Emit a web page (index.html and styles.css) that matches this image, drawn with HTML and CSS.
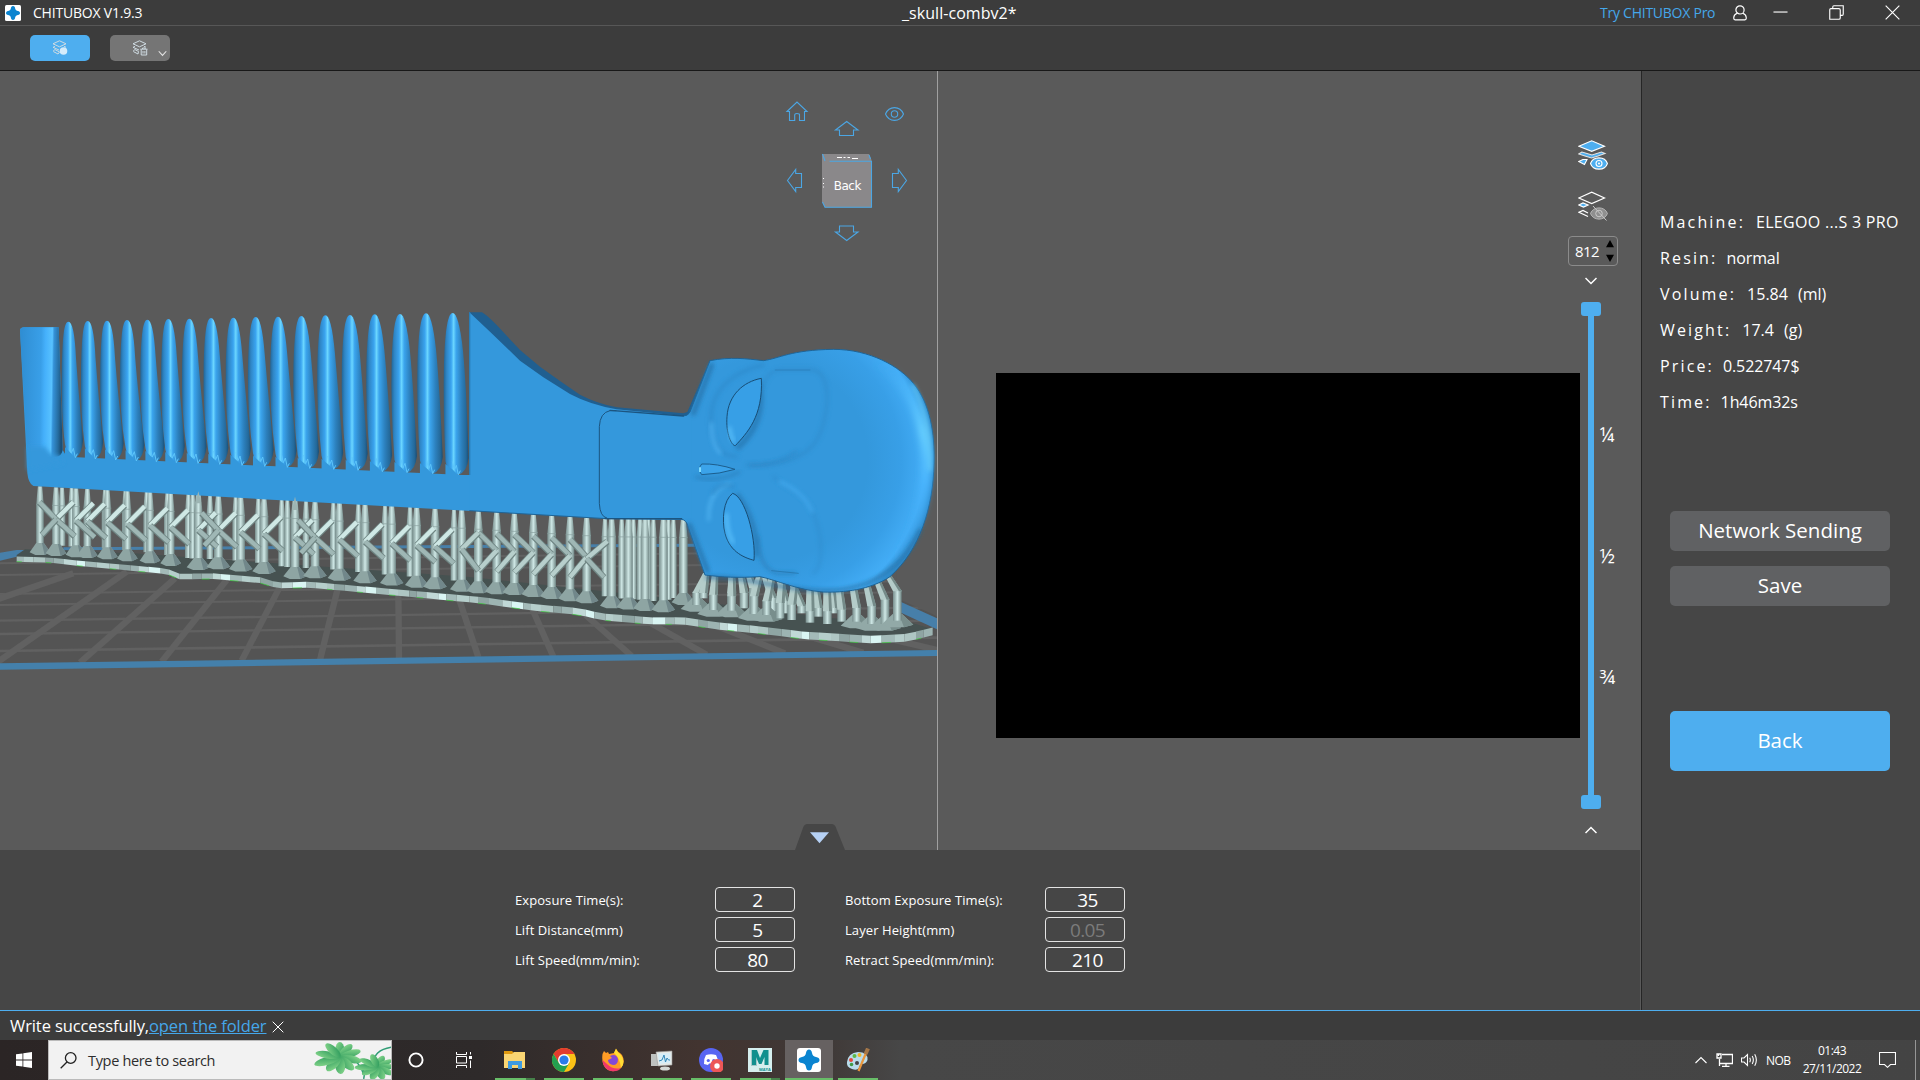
FILE: index.html
```html
<!DOCTYPE html>
<html lang="en">
<head>
<meta charset="utf-8">
<title>CHITUBOX V1.9.3</title>
<link rel="stylesheet" href="styles.css">
</head>
<body>
<svg class="defs" width="0" height="0">
  <defs>
    <linearGradient id="tooth" x1="0" x2="1" y1="0" y2="0">
      <stop offset="0" stop-color="#226596"/><stop offset=".12" stop-color="#2f86c6"/><stop offset=".3" stop-color="#3aa4f0"/>
      <stop offset=".4" stop-color="#6bd6ff"/><stop offset=".5" stop-color="#3ba5ee"/><stop offset=".72" stop-color="#2c80bd"/><stop offset=".9" stop-color="#24699a"/><stop offset="1" stop-color="#1a4e75"/>
    </linearGradient>
    <linearGradient id="block" x1="0" x2="1" y1="0" y2=".05">
      <stop offset="0" stop-color="#2f8dd2"/><stop offset=".5" stop-color="#399fe8"/><stop offset=".6" stop-color="#45b0fb"/><stop offset=".76" stop-color="#58c2ff"/><stop offset=".8" stop-color="#3592d8"/><stop offset=".93" stop-color="#256c9f"/><stop offset="1" stop-color="#1b4f76"/>
    </linearGradient>
    <linearGradient id="pillar" x1="0" x2="1" y1="0" y2="0">
      <stop offset="0" stop-color="#788e8d"/><stop offset=".3" stop-color="#a7bfbd"/><stop offset=".5" stop-color="#cfe8e6"/><stop offset=".75" stop-color="#a0b8b6"/><stop offset="1" stop-color="#6d8281"/>
    </linearGradient>
    <radialGradient id="skull" gradientUnits="userSpaceOnUse" cx="2300" cy="510" r="505">
      <stop offset="0" stop-color="#3498dc"/><stop offset=".6" stop-color="#3498dc"/><stop offset=".8" stop-color="#389fe7"/><stop offset=".94" stop-color="#43adf6"/><stop offset="1" stop-color="#2f8cce"/>
    </radialGradient>
    <linearGradient id="rim" x1="0" x2="0" y1="0" y2="1">
      <stop offset="0" stop-color="#4ab5ff" stop-opacity="0"/><stop offset=".35" stop-color="#6bd3ff"/><stop offset=".6" stop-color="#4bb6ff"/><stop offset="1" stop-color="#3ba4ee" stop-opacity="0"/>
    </linearGradient>
    <filter id="soft" x="-30%" y="-30%" width="160%" height="160%"><feGaussianBlur stdDeviation="6"/></filter>
    <filter id="soft2" x="-50%" y="-30%" width="200%" height="160%"><feGaussianBlur stdDeviation="11"/></filter>
    <linearGradient id="leafg" x1="0" x2="1" y1="0" y2="1"><stop offset="0" stop-color="#8fdc90"/><stop offset="1" stop-color="#239457"/></linearGradient>
    <g id="leaf" fill="url(#leafg)">
      <ellipse cx="0" cy="-8" rx="3.6" ry="8"/><ellipse cx="0" cy="-8" rx="3.6" ry="8.500" transform="rotate(35)"/><ellipse cx="0" cy="-9" rx="3.6" ry="9" transform="rotate(68)"/>
      <ellipse cx="0" cy="-9" rx="4" ry="9" transform="rotate(105)"/><ellipse cx="0" cy="-9" rx="4" ry="8.500" transform="rotate(142)"/><ellipse cx="0" cy="-9" rx="4" ry="9" transform="rotate(178)"/>
      <ellipse cx="0" cy="-9" rx="4" ry="9" transform="rotate(215)"/><ellipse cx="0" cy="-11" rx="4.200" ry="11" transform="rotate(248)"/><ellipse cx="0" cy="-10" rx="3.800" ry="10" transform="rotate(283)"/><ellipse cx="0" cy="-9" rx="3.600" ry="9" transform="rotate(322)"/>
    </g>
  </defs>
</svg>

<header class="titlebar">
  <svg class="app-logo" viewBox="0 0 16 16"><rect width="16" height="16" rx="1.5" fill="#fff"/><path fill="#0a84d0" d="M8 1 Q10 1 10.3 4.2 L11.8 5.7 Q15 6 15 8 Q15 10 11.8 10.3 L10.3 11.8 Q10 15 8 15 Q6 15 5.7 11.8 L4.2 10.3 Q1 10 1 8 Q1 6 4.2 5.7 L5.7 4.2 Q6 1 8 1Z"/></svg>
  <span class="app-name">CHITUBOX V1.9.3</span>
  <span class="doc-name">_skull-combv2*</span>
  <div class="window-tools">
    <a class="try-pro">Try CHITUBOX Pro</a>
    <svg class="user-icon" viewBox="0 0 14 16"><path d="M4.2 8.2 Q1 9.5 .8 12.2 V13.6 Q.8 14.8 2 14.8 H12 Q13.2 14.8 13.2 13.6 V12.2 Q13 9.5 9.8 8.2 M7 .8 A4 4 0 0 1 7 9 A4 4 0 0 1 7 .8Z"/></svg>
    <svg class="win-icon" viewBox="0 0 16 16"><path d="M.5 7.5H15.5"/></svg>
    <svg class="win-icon" viewBox="0 0 16 16"><path d="M4 3.5V2Q4 .8 5.2 .8H15.2V9.5Q15.2 11 14 11H12 M2 3.8H10.5Q12 3.8 12 5.2V13.8Q12 15.2 10.5 15.2H.8V5Q.8 3.8 2 3.8Z"/></svg>
    <svg class="win-icon" viewBox="0 0 16 16"><path d="M.7 .7L15.3 15.3M15.3 .7L.7 15.3"/></svg>
  </div>
</header>

<nav class="toolbar">
  <button class="tool tool-on">
    <svg viewBox="0 0 16 16" width="16" height="16"><path d="M1 3.8L7.5 .8L14 3.8L7.5 6.8ZM3 6.4L1 7.3L7 10M12 6.4L14 7.2M1.3 10.7L3 9.6L7.5 12L6 14L1.3 11.5" class="ln"/><circle cx="11.5" cy="11" r="3.8" fill="#d5ecfb"/></svg>
  </button>
  <button class="tool tool-off">
    <svg viewBox="0 0 16 16" width="16" height="16"><path d="M1 3.8L7.5 .8L14 3.8L7.5 6.8ZM3 6.4L1 7.3L7 10M12 6.4L14 7.2M1.3 10.7L3 9.6L6.5 11.5L6 14L1.3 11.5M8.3 9.2H15.5M10.5 9V8H13.2V9M9.2 9.5V15H14.7V9.5M11 11V13.5M12.9 11V13.5" class="ln"/></svg>
    <svg class="tool-caret" viewBox="0 0 10 7"><path d="M.8 1L5 5.6L9.2 1"/></svg>
  </button>
</nav>

<main class="workspace">
  <section class="stage">
    <div class="views">
      <div class="model-view">
        <svg id="scene" class="scene" viewBox="0 -657 2811 2337" preserveAspectRatio="none"></svg>
        <svg class="nav-cube" viewBox="0 0 180 180">
          <g class="outline">
            <path d="M27 31.5L37 22L47 31.5H44.5V40.5H39.5V34.5Q39.5 33.5 37 33.5Q34.7 33.5 34.7 35V40.5H29.5V31.5Z"/>
            <path d="M125.500 34C129 25.500 140 25.500 143.500 34C140 42.500 129 42.500 125.500 34Z"/><circle cx="134.500" cy="34" r="3.200"/>
            <path d="M75.500 50L86.700 41.500L98 50H93.500V55.500H79.500V50Z"/>
            <path d="M75.500 152L86.700 160.500L98 152H93.500V146H79.500V152Z"/>
            <path d="M27.500 100.500L35.700 89.500V93.500H41.500V107.500H35.700V111.500Z"/>
            <path d="M146.500 100.500L138.300 89.500V93.500H132.500V107.500H138.300V111.500Z"/>
          </g>
          <path fill="#8a888a" d="M62 74H109L111.500 80V127.500H65L62 122Z"/>
          <path class="outline" d="M62.500 74L65 81M69.500 81.300H111.500V127.300H65L62.500 122M109 75L110.500 79"/>
          <path stroke="#fff" d="M77 77.500H82M83.500 77.500H85.500M87.500 77.500H90M92 78.500H98M63.500 98V99M63.500 103V104M63.500 106.500V107.500"/>
          <text x="87.300" y="109.600" text-anchor="middle" class="cube-label">Back</text>
        </svg>
        <svg class="panel-tab" viewBox="0 0 50 26"><path fill="#464646" d="M0 26L8.500 2.500Q9.500 0 12 0H37Q39.500 0 40.500 2.500L50 26Z"/><path fill="#b6d1f5" d="M15 8.300H34L24.500 19.300Z"/></svg>
      </div>
      <div class="slice-view">
        <div class="slice-image"></div>
        <div class="layer-rail">
          <svg class="layer-icon" viewBox="0 0 30 30"><g stroke="#fff" stroke-width="1.100" fill="#4eaeef"><path d="M.8 6.200L13.700 .8L26.500 6.200L13.700 11.300Z"/><path d="M4 12L.8 14L7 16L13.500 18L20 16L27 13.500L23.500 12L14 15Z" stroke="#e3e3e3"/><path d="M5 19.500L.8 21.500L6.500 24.500L9 19.500Z"/><path d="M12.500 23.500C15 16 27 16 29.400 23.500C27 31 15 31 12.500 23.500Z"/><circle cx="21" cy="23.500" r="3"/></g><circle cx="21" cy="23.500" r="1" fill="#fff"/></svg>
          <svg class="layer-icon layer-icon-2" viewBox="0 0 30 30"><g stroke="#fff" stroke-width="1.200" fill="none"><path d="M.8 7L13.700 1.200L26.500 7L13.700 12.500Z"/><path d="M.8 14L5 12L10 14L5.500 16Z" fill="#4eaeef"/><path d="M10 22L5 19.500L1 21.300L10 25.500"/></g><path fill="#8f8f8f" stroke="#b5b5b5" d="M12.500 22.500C15 15 27 15 29.400 22.500C27 30 15 30 12.500 22.500Z"/><path stroke="#c9c9c9" fill="none" d="M15 15L28.500 29.500"/><circle cx="21" cy="22.500" r="3.300" fill="none" stroke="#c9c9c9"/></svg>
          <div class="spinner"><span>812</span><svg viewBox="0 0 8 22"><path d="M4 0L8 7.300H0ZM4 22L8 14.700H0Z"/></svg></div>
          <svg class="chev" viewBox="0 0 12 8"><path d="M.5 1L6 6.500L11.500 1"/></svg>
          <div class="slider"><i class="knob"></i><i class="track"></i><i class="knob"></i>
            <div class="ticks"><span>¼</span><span>½</span><span>¾</span></div>
          </div>
          <svg class="chev chev-up" viewBox="0 0 12 8"><path d="M.5 7L6 1.500L11.500 7"/></svg>
        </div>
      </div>
    </div>
    <div class="params">
      <div class="param-grid">
        <label>Exposure Time(s):</label><span class="field">2</span><label>Bottom Exposure Time(s):</label><span class="field">35</span>
        <label>Lift Distance(mm)</label><span class="field">5</span><label>Layer Height(mm)</label><span class="field field-off">0.05</span>
        <label>Lift Speed(mm/min):</label><span class="field">80</span><label>Retract Speed(mm/min):</label><span class="field">210</span>
      </div>
    </div>
  </section>
  <aside class="side">
    <dl class="facts">
      <div><dt>Machine:</dt><dd class="wide">ELEGOO ...S 3 PRO</dd></div>
      <div><dt>Resin:</dt><dd>normal</dd></div>
      <div><dt>Volume:</dt><dd class="measure">15.84 <span>(ml)</span></dd></div>
      <div><dt>Weight:</dt><dd class="measure">17.4 <span>(g)</span></dd></div>
      <div><dt>Price:</dt><dd>0.522747$</dd></div>
      <div><dt>Time:</dt><dd>1h46m32s</dd></div>
    </dl>
    <div class="actions">
      <button class="btn">Network Sending</button>
      <button class="btn">Save</button>
      <button class="btn btn-primary">Back</button>
    </div>
  </aside>
</main>

<div class="status"><span>Write successfully,</span><a>open the folder</a><svg viewBox="0 0 12 12"><path d="M.7 .7L11.300 11.300M11.300 .7L.7 11.300"/></svg></div>

<footer class="taskbar">
  <div class="start"><svg viewBox="0 0 16 16" width="16" height="16"><path fill="#fff" d="M0 2.300L6.500 1.400V7.600H0ZM7.300 1.300L16 0V7.600H7.300ZM0 8.400H6.500V14.600L0 13.700ZM7.300 8.400H16V16L7.300 14.800Z"/></svg></div>
  <div class="search">
    <svg class="lens" viewBox="0 0 17 17"><circle cx="10.700" cy="6" r="5.300"/><path d="M7 10L.7 16.300"/></svg>
    <span>Type here to search</span>
    <svg class="plants" viewBox="0 0 78 38"><path d="M28 16Q45 16 50 34M60 22Q60 9 78 6M48 24Q52 30 50 38" fill="none" stroke="#2f9c74" stroke-width="1.500"/><use href="#leaf" transform="translate(26 16) scale(1.250 .95)"/><use href="#leaf" transform="translate(64 26) scale(1.050 .75) rotate(20)"/></svg>
  </div>
  <div class="cortana"><svg viewBox="0 0 16 16" width="16" height="16"><circle cx="8" cy="8" r="6.600" fill="none" stroke="#fff" stroke-width="1.900"/></svg></div>
  <div class="taskview"><svg viewBox="0 0 17 16" width="17" height="16"><path fill="none" stroke="#fff" d="M.5 0V2.500H10.500V0M.5 4.500H10.500V11H.5ZM.5 16V13.500H10.500V16M14.500 0V2.500M14.500 8.500V16"/><path fill="#fff" d="M13 4H16V7H13Z"/></svg></div>
  <div class="apps">
    <div class="app multi"><svg viewBox="0 0 24 24"><path fill="#e09a10" d="M1 3H9L11 5V8H1Z"/><path fill="#fad673" d="M1 6H9L11 4H22V20H1Z"/><path fill="#3f9be0" d="M5 21V13H19V21H15V17H9V21Z"/></svg></div>
    <div class="app"><svg viewBox="0 0 24 24"><circle cx="12" cy="12" r="12" fill="#fbc116"/><path fill="#e33b2e" d="M1.600 6A12 12 0 0 1 22.400 6H12L7 15Z"/><path fill="#23a050" d="M1.600 6A12 12 0 0 0 12 24L17.200 15L12 17L7 15Z"/><circle cx="12" cy="12" r="6" fill="#fff"/><circle cx="12" cy="12" r="4.600" fill="#2b7be9"/></svg></div>
    <div class="app"><svg viewBox="0 0 24 24"><path fill="#ff9c26" d="M1.500 6L3 3L5 5L7 4L8 6L13 5L15 1Q17 4 19 5L21 7Q25 14 20 20Q14 25 7 22Q0 18 1.500 6Z"/><path fill="#ffdd35" d="M13 5L15 .5Q16 4 20 7Q25 14 20 20Q19 10 13 5Z"/><path fill="#f0386b" d="M1.500 12Q2 21 10 23Q17 24 20 20Q12 22 6 16Z"/><path fill="#8348d8" d="M9 8Q15 5 17 11Q17 17 12 17Q7 16 7 12L11 10Z"/></svg></div>
    <div class="app"><svg viewBox="0 0 24 24"><path fill="#bfc2c0" d="M1 6H10V18H1Z"/><path fill="#e6e8e4" stroke="#999" stroke-width=".6" d="M6 4L22 3V17L8 18Z"/><path fill="#d7edf7" d="M8 5.500L20.500 5V15L9 16Z"/><path fill="none" stroke="#3287b8" d="M9 13L12 12L14 7L15.500 14L17 10L18.500 12H20"/><ellipse cx="15" cy="20.500" rx="5" ry="2" fill="#d5d8d5"/></svg></div>
    <div class="app"><svg viewBox="0 0 24 24"><circle cx="12" cy="12" r="12" fill="#5865f2"/><path fill="#fff" d="M7 7Q12 5.500 17 7Q19.500 11 19 16L15 17L14 15.500H10L9 17L5 16Q4.500 11 7 7Z"/><circle cx="9.300" cy="12.500" r="1.600" fill="#5865f2"/><circle cx="14.700" cy="12.500" r="1.600" fill="#5865f2"/><circle cx="18" cy="18" r="7" fill="#ed5757"/><circle cx="18" cy="18" r="2.700" fill="#fff"/></svg></div>
    <div class="app multi"><svg viewBox="0 0 24 24"><path fill="#d6efee" d="M0 0H24V24H0Z"/><path fill="#a5c9c9" d="M3 2H9V18H3Z"/><path fill="#12908e" d="M4 2H9L12 10L15.500 2H20.500V17H16.500V9L13.500 16H11L8 9V17H4Z"/><text x="11" y="23" class="maya">MAYA</text></svg></div>
    <div class="app current"><svg viewBox="0 0 24 24"><rect width="24" height="24" rx="3" fill="#fff"/><path fill="#0a84d0" d="M12 1.500Q14.500 1.500 15 5Q15.500 8.500 19 9Q22.500 9.500 22.500 12Q22.500 14.500 19 15Q15.500 15.500 15 19Q14.500 22.500 12 22.500Q9.500 22.500 9 19Q8.500 15.500 5 15Q1.500 14.500 1.500 12Q1.500 9.500 5 9Q8.500 8.500 9 5Q9.500 1.500 12 1.500Z"/></svg></div>
    <div class="app"><svg viewBox="0 0 24 24"><path fill="#b9dcec" d="M1 14Q2 5 12 4Q22 4 21.500 12Q20 16 16 16Q13 17 13 20Q11 23 6 21Q0 19 1 14Z"/><circle cx="5" cy="12" r="2" fill="#e54a3c"/><circle cx="8.500" cy="8" r="2" fill="#5db947"/><circle cx="13.500" cy="7" r="2" fill="#f0b429"/><circle cx="11" cy="15" r="2" fill="#454545"/><circle cx="5.500" cy="16.500" r="1.800" fill="#3f9b46"/><path stroke="#e9963d" stroke-width="2.200" d="M12.500 23L20 5"/><path stroke="#a47648" stroke-width="4" d="M19.500 6L22 .5"/></svg></div>
  </div>
  <div class="tray">
    <svg class="t-up" viewBox="0 0 12 8"><path d="M.5 7L6 1.500L11.500 7"/></svg>
    <svg class="t-net" viewBox="0 0 17 14"><path d="M6 1.500H16.500V10.500H3.500V6M10 10.500V13.500M6 13.500H13.500M1 1H5V5H1ZM3.500 6V13M2.500 1V3"/></svg>
    <svg class="t-vol" viewBox="0 0 17 14"><path d="M.5 5H3L6.500 1.500V12.500L3 9H.5ZM8.700 4.700Q10 7 8.700 9.300M11.200 3Q13.500 7 11.200 11M13.700 1.300Q17 7 13.700 12.700"/></svg>
    <span class="lang">NOB</span>
    <div class="clock"><span>01:43</span><span>27/11/2022</span></div>
    <svg class="t-note" viewBox="0 0 17 16"><path d="M.5 .5H16.500V12.500H11.500L8.500 15.300L5.500 12.500H.5Z"/></svg>
  </div>
</footer>
<script src="scene.js"></script>
</body>
</html>
```
FILE: styles.css
```css
* { box-sizing: border-box; }
body { margin: 0; width: 1920px; height: 1080px; overflow: hidden; display: flex; flex-direction: column; background: #464646; color: #fff; font-family: "Open Sans", "Noto Sans", sans-serif; font-size: 14px; }
svg { display: block; }
.defs { position: absolute; }
button { border: 0; padding: 0; color: #fff; font-family: inherit; }

.titlebar { height: 26px; flex: none; display: grid; grid-template-columns: 16px 844px 1fr auto; align-items: center; padding-left: 5px; background: #3c3c3c; border-bottom: 1px solid #575757; }
.app-logo { width: 16px; height: 16px; }
.app-name { padding-left: 12px; letter-spacing: -.2px; }
.doc-name { padding-left: 37px; font-size: 16px; letter-spacing: .05px; white-space: nowrap; }
.window-tools { display: flex; align-items: center; height: 25px; padding-right: 20px; }
.window-tools svg { fill: none; stroke: #fff; stroke-width: 1.2; }
.try-pro { width: 133px; color: #45a7ea; letter-spacing: -.25px; white-space: nowrap; }
.user-icon { width: 14px; height: 16px; }
.win-icon { width: 15px; height: 15px; margin-left: 41px; }
.user-icon + .win-icon { margin-left: 26px; }

.toolbar { height: 45px; flex: none; display: flex; gap: 20px; padding: 9px 30px 0; background: #3c3c3c; border-bottom: 1px solid #181818; }
.tool { position: relative; width: 60px; height: 26px; border-radius: 5px; display: flex; align-items: center; justify-content: center; }
.tool-on { background: #4eaeef; }
.tool-off { background: #757575; }
.ln { fill: none; stroke: #cfdbe2; stroke-width: 1; }
.tool-caret { position: absolute; right: 3px; bottom: 4px; width: 9px; height: 7px; fill: none; stroke: #e5e5e5; stroke-width: 1.2; }

.workspace { height: 939px; flex: none; display: flex; }
.stage { width: 1641px; display: flex; flex-direction: column; }
.views { height: 779px; display: flex; background: #5a5a5a; }
.model-view { position: relative; width: 938px; border-right: 1px solid #a0a0a0; }
.scene { width: 937px; height: 779px; }
.nav-cube { position: absolute; left: 760px; top: 9px; width: 180px; height: 180px; }
.outline { fill: none; stroke: #4ba6e4; stroke-width: 1.1; }
.cube-label { fill: #fff; font-size: 12px; font-family: "DejaVu Sans", sans-serif; letter-spacing: -.5px; }
.panel-tab { position: absolute; left: 795px; bottom: 0; width: 50px; height: 26px; }
.slice-view { flex: 1; display: flex; padding-left: 58px; }
.slice-image { width: 584px; height: 365px; margin-top: 302px; background: #000; }
.layer-rail { width: 60px; margin-left: -12px; padding-top: 69px; display: flex; flex-direction: column; align-items: flex-start; }
.layer-icon { width: 30px; height: 30px; margin-left: 10px; }
.layer-icon-2 { margin-top: 21px; }
.spinner { width: 50px; height: 30px; margin-top: 15px; display: flex; align-items: center; justify-content: space-between; padding: 0 3px 0 6px; border: 1px solid #8b8b8b; border-radius: 4px; font-size: 15px; letter-spacing: -.6px; }
.spinner svg { width: 8px; height: 22px; }
.chev { width: 12px; height: 8px; margin: 11px 0 0 17px; fill: none; stroke: #fff; stroke-width: 1.5; }
.slider { position: relative; width: 20px; height: 507px; margin: 17px 0 0 13px; display: flex; flex-direction: column; align-items: center; }
.knob { width: 20px; height: 14px; border-radius: 3px; background: #4eaeef; }
.track { width: 6px; flex: 1; background: #4eaeef; }
.ticks { position: absolute; left: 18.5px; top: 72px; height: 364px; display: flex; flex-direction: column; font-size: 20px; line-height: 121px; }
.chev-up { margin-top: 17px; }

.params { height: 160px; padding: 37px 0 0 515px; background: #464646; border-right: 1px solid #5a5a5a; }
.param-grid { display: grid; grid-template-columns: 200px 80px 250px 80px; row-gap: 5px; grid-auto-rows: 25px; align-items: center; }
.param-grid label { font-size: 13px; letter-spacing: .08px; white-space: nowrap; }
.param-grid label:nth-child(4n + 3) { padding-left: 50px; }
.field { height: 25px; display: flex; align-items: center; justify-content: center; padding-left: 5px; border: 1px solid #e3e3e3; border-radius: 4px; font-size: 19px; letter-spacing: -.6px; }
.field-off { color: #7b7b7b; }

.side { flex: 1; padding: 133px 0 0 18px; background: #464646; border-left: 1px solid #262626; }
.facts { margin: 0; }
.facts div { height: 36px; display: flex; align-items: center; font-size: 16px; white-space: nowrap; }
.facts dt { letter-spacing: 2.15px; }
.facts dd { margin-left: 9px; letter-spacing: -.1px; }
.facts .wide { margin-left: 11px; letter-spacing: .3px; }
.facts .measure { margin-left: 11px; letter-spacing: 0; }
.facts dd span { margin-left: 6px; }
.actions { width: 220px; margin: 91px 0 0 10px; display: flex; flex-direction: column; gap: 15px; }
.btn { height: 40px; padding-bottom: 2px; border-radius: 5px; background: #606163; font-size: 20.5px; }
.btn-primary { height: 60px; margin-top: 90px; background: #4eaeef; }

.status { height: 30px; flex: none; display: flex; align-items: center; padding-left: 10px; background: #3c3c3c; border-top: 1px solid #4eaeef; font-size: 16.5px; line-height: 27px; white-space: nowrap; letter-spacing: -.1px; }
.status a { color: #45a7ea; text-decoration: underline; }
.status svg { width: 12px; height: 12px; margin: 3px 0 0 5px; fill: none; stroke: #fff; }

.taskbar { height: 40px; flex: none; display: flex; background: linear-gradient(90deg, #2b2525 0, #2e2a2a 480px, #423430 700px, #3f3836 820px, #474747 900px, #444 100%); }
.start { width: 48px; display: grid; place-items: center; }
.search { width: 344px; display: flex; align-items: center; padding-left: 11px; background: #f2f2f2; border: 1px solid #bbb; color: #2d2d2d; font-size: 14.5px; letter-spacing: -.33px; }
.lens { width: 17px; height: 17px; margin-right: 11px; fill: none; stroke: #222; stroke-width: 1.3; flex: none; }
.search span { width: 227px; white-space: nowrap; }
.plants { width: 78px; height: 38px; overflow: hidden; }
.cortana { width: 47px; display: grid; place-items: center; }
.taskview { width: 50px; display: grid; place-items: center; }
.apps { display: flex; padding-left: 1px; }
.app { width: 49px; height: 40px; padding: 8px 12px 0 13px; background: linear-gradient(#68be68, #68be68) 5px 38px / 40px 2px no-repeat; }
.app svg { width: 24px; height: 24px; }
.multi { background: linear-gradient(90deg, #68be68 31px, #46814a 31px) 5px 38px / 40px 2px no-repeat; }
.current { background: linear-gradient(#68be68, #68be68) 1px 38px / 48px 2px no-repeat, linear-gradient(#666161, #666161) 1px 0 / 48px 40px no-repeat; }
.maya { font-size: 4px; font-weight: 700; fill: #12908e; }
.tray { margin-left: auto; width: 225px; display: flex; align-items: center; }
.tray svg { fill: none; stroke: #fff; stroke-width: 1.1; flex: none; }
.t-up { width: 12px; height: 8px; }
.tray .t-net { width: 17px; height: 14px; margin-left: 9px; stroke-width: 1.3; }
.t-vol { width: 17px; height: 14px; margin-left: 8px; }
.lang { width: 25px; margin-left: 8px; font-size: 12px; letter-spacing: -.5px; }
.clock { width: 60px; margin-left: 11px; display: flex; flex-direction: column; align-items: center; font-size: 12px; line-height: 18px; letter-spacing: -.5px; }
.t-note { width: 17px; height: 16px; margin-left: 17px; }
.tray::after { content: ""; width: 1px; height: 40px; margin-left: 19px; background: #969696; }
```
FILE: scene.js
```javascript
// Draws the build plate, supports and comb model in the 3D view.
(() => {
const out = [];
const add = (s) => out.push(s);
const poly = (p, fill, extra = '') => add(`<path d="${p}" fill="${fill}" ${extra}/>`);
const line = (x1, y1, x2, y2, c, w) => add(`<path d="M${x1} ${y1}L${x2} ${y2}" stroke="${c}" stroke-width="${w}" fill="none"/>`);
const interp = (pts, x) => {
  for (let i = 1; i < pts.length; i++) {
    if (x <= pts[i][0]) {
      const [a, b] = [pts[i - 1], pts[i]];
      return a[1] + (b[1] - a[1]) * (x - a[0]) / (b[0] - a[0]);
    }
  }
  return pts[pts.length - 1][1];
};

// build plate
poly('M0 790L150 775L2500 765L2811 980V1085L0 1125Z', '#545454');
[[820, 6], [855, 6], [912, 6], [945, 6], [992, 7], [1032, 7], [1083, 8]].forEach(([y, w]) => line(0, y, 2811, y - 40, '#616161', w));
[[-220, 1000, 220, 850], [-20, 1125, 380, 845], [240, 1118, 525, 865], [485, 1115, 680, 870], [725, 1112, 845, 880], [960, 1110, 1012, 900],
 [1197, 1105, 1195, 900], [1435, 1102, 1375, 920], [1660, 1100, 1585, 930], [1895, 1098, 1740, 960], [2120, 1094, 1900, 970],
 [2355, 1090, 2080, 980], [2590, 1088, 2330, 1010], [2811, 1080, 2600, 1030]].forEach((l) => line(...l, '#616161', 19));
line(190, 776, 2085, 766, '#477fa9', 9);
poly('M0 788L50 780H140V800L50 800L0 812Z', '#477fa9');
poly('M2690 930L2811 985V1018L2690 962Z', '#477fa9');
poly('M2811 690V978L2690 925V800Z', '#5a5a5a');
poly('M0 1120L2811 1080V1098L0 1139Z', '#4480ab');

// raft
const rim = [[50, 815], [150, 818], [240, 828], [500, 852], [540, 868], [640, 867], [790, 880], [830, 895], [930, 893], [1160, 914], [1440, 940],
  [1600, 962], [1740, 975], [1800, 990], [1950, 1003], [2050, 1003], [2150, 1018], [2270, 1030], [2410, 1047], [2610, 1060], [2720, 1055], [2798, 1036]];
let deck = 'M50 795L75 778L400 790L1400 860L2060 930L2500 985L2740 1000L2798 1018';
for (const [x, y] of [...rim].reverse()) deck += `L${x} ${y - 14}`;
poly(deck + 'Z', '#465251');
const tones = ['#a3bab8', '#c0d8d6', '#8fa5a3', '#b5cecb', '#d9f5f3', '#9db4b2', '#aec6c3'];
for (let x = 50, i = 0; x < 2795; i++) {
  const w = 22 + (i * 7) % 19, nx = Math.min(2798, x + w), a = interp(rim, x), b = interp(rim, nx), h = 15 + x / 330;
  poly(`M${x} ${a - h}L${nx} ${b - h}V${b}L${x} ${a}Z`, tones[(i * 3) % 7]);
  if (i % 3 === 0) line(x, a, x + w * .7, a + (b - a) * .7, '#38d23a', 2);
  x = nx;
}

// comb supports
const under = [[100, 588], [600, 614], [1440, 663], [1810, 685], [2080, 688]];
const base = [[120, 795], [228, 802], [322, 808], [450, 820], [512, 828], [595, 840], [655, 838], [792, 852], [885, 867], [945, 865], [1095, 880],
  [1305, 898], [1435, 910], [1543, 915], [1655, 927], [1760, 940], [1835, 955], [1990, 967], [2050, 945]];
const pillar = (x, w, y0, y1, cone) => {
  poly(`M${x - w * .28} ${y0}H${x + w * .28}L${x + w / 2} ${y0 + 55}V${y1 - 10}H${x - w / 2}V${y0 + 55}Z`, 'url(#pillar)');
  if (cone) {
    poly(`M${x - w * .5} ${y1 - 36}H${x + w * .5}L${x + w * 1.35} ${y1 - 8}L${x + w * .6} ${y1}H${x - w * .6}L${x - w * 1.35} ${y1 - 8}Z`, '#8ea5a3');
    poly(`M${x + w * .25} ${y1 - 36}H${x + w * .5}L${x + w * 1.35} ${y1 - 8}L${x + w * .6} ${y1}Z`, '#71878a');
  }
  line(x - w / 2, y0 + 55, x + w / 2, y0 + 55, '#8aa09e', 2);
};
const brace = (x1, y1, x2, y2, c = '#9fb7b5') => { line(x1, y1, x2, y2, '#6f8583', 19); line(x1, y1 - 1, x2, y2 - 1, c, 13); };
[186, 215, 315, 376, 440, 502, 565, 578, 630, 707, 775, 845, 862, 918, 1000, 1075, 1155, 1230, 1362, 1815, 1865, 1900, 1920, 1945, 1960, 2005, 2020].forEach((x) => {
  pillar(x, 20, interp(under, x), interp(base, x) - 22, false);
});
const front = [120, 168, 228, 262, 322, 382, 450, 512, 595, 655, 722, 792, 885, 945, 1018, 1095, 1175, 1250, 1305, 1385,
  1435, 1490, 1543, 1600, 1655, 1710, 1760, 1835, 1885, 1935, 1990, 2050];
front.forEach((x) => pillar(x, x < 560 ? 23 : 26, interp(under, x), interp(base, x), true));
front.forEach((x, i) => {
  const mid = (interp(under, x) + interp(base, x)) / 2;
  if (x < 1385 && i > 0) {
    brace(x, mid - 6, x + 52, mid - 58, '#cfe8e5');
    brace(x, mid - 6, x + 56, mid + 44);
    if (i === 1 || x === 655 || x === 945) { brace(x, mid - 6, x - 50, mid - 58); brace(x, mid - 6, x - 42, mid + 40); }
  } else if (x >= 1400 && x < 1760) {
    const n = front[i + 1];
    brace(x, mid - 58, n, mid - 4);
    brace(x, mid + 56, n, mid - 4, '#b7cfcc');
    if (x === 1435) { brace(1385, mid - 8, 1435, mid - 58, '#b7cfcc'); brace(1385, mid - 8, 1435, mid + 56); }
    if (x === 1710) { brace(1760, mid, 1822, mid - 52, '#b7cfcc'); brace(1760, mid, 1812, mid + 56); }
  }
});

// skull supports: [foot x, head x, elbow y, foot y, has cone]
[[2090, 2118, 905, 965, 1], [2195, 2195, 905, 975, 0], [2232, 2222, 905, 975, 0], [2260, 2245, 890, 990, 0], [2318, 2290, 920, 985, 0], [2355, 2335, 930, 990, 0], [2405, 2365, 945, 990, 0], [2455, 2440, 950, 1000, 0], [2500, 2490, 950, 990, 0],
 [2110, 2118, 905, 945, 0], [2140, 2145, 910, 980, 1], [2195, 2195, 915, 982, 1], [2262, 2280, 915, 992, 1], [2300, 2318, 930, 995, 1],
 [2340, 2348, 935, 1005, 0], [2375, 2388, 940, 1010, 0], [2430, 2430, 960, 1018, 0], [2482, 2480, 960, 1022, 0], [2525, 2512, 955, 1015, 0],
 [2570, 2552, 950, 1015, 1], [2615, 2592, 945, 1022, 1], [2655, 2622, 925, 1022, 1], [2692, 2660, 900, 1012, 1]].forEach(([x, hx, ey, fy, cone]) => {
  if (cone) { poly(`M${x - 14} ${fy - 40}H${x + 14}L${x + 48} ${fy - 8}L${x + 20} ${fy}H${x - 20}L${x - 48} ${fy - 8}Z`, '#92a9a7'); poly(`M${x + 5} ${fy - 40}H${x + 14}L${x + 48} ${fy - 8}L${x + 20} ${fy}Z`, '#788e8c'); }
  poly(`M${x - 13} ${ey}H${x + 13}V${fy - 20}H${x - 13}Z`, 'url(#pillar)');
  poly(`M${hx - 9} 850H${hx + 9}L${x + 13} ${ey + 4}H${x - 13}Z`, '#b4ccc9');
  poly(`M${hx + 3} 850H${hx + 10}L${x + 14} ${ey + 4}H${x + 5}Z`, '#758b89');
});

// teeth: [top x, top y, bottom x, bottom y]
const teeth = [[205, 95, 222, 503], [263, 93, 282, 507], [321, 92, 343, 510], [381, 90, 405, 513], [442, 89, 465, 515], [505, 87, 525, 518],
  [568, 86, 590, 520], [633, 84, 655, 523], [700, 83, 722, 526], [767, 81, 790, 529], [834, 80, 858, 532], [904, 78, 925, 535],
  [976, 76, 997, 538], [1050, 75, 1070, 541], [1124, 73, 1143, 545], [1200, 72, 1217, 548], [1278, 70, 1294, 551], [1358, 69, 1371, 554]];
poly('M60 120Q62 112 72 112H176L188 480L200 500L1390 555L1415 555V663L1000 640L100 588Q85 580 82 550Z', '#3498dc');
poly('M60 120Q62 112 72 112H176L188 480Q184 500 168 500Q130 500 84 520Z', 'url(#block)');
poly('M135 470Q150 500 188 498V520L82 540V470Z', '#3498dc', 'filter="url(#soft)"');
teeth.forEach(([tx, ty, bx, by], i) => {
  const w = 23 + i * .45, b = w + 4, m = by - 70;
  poly(`M${tx} ${ty}C${tx - 14} ${ty} ${tx - w * .75} ${ty + 50} ${tx - w * .85} ${ty + 150}Q${tx - w * .95} ${ty + 280} ${bx - b} ${m + 30}Q${bx - b + 5} ${by - 4} ${bx + 4} ${by}Q${bx + b - 4} ${by - 8} ${bx + b} ${m + 20}Q${tx + w * 1.35} ${ty + 220} ${tx + w} ${ty + 110}Q${tx + 18} ${ty} ${tx} ${ty}Z`, 'url(#tooth)');
  poly(`M${bx - b} ${m + 38}Q${bx - 10} ${m + 55} ${bx + 8} ${by + 6}H${bx - b}Z`, '#3498dc');
  add(`<path d="M${bx - 14} ${m + 30}l6 26l6 -14l6 28l6 -12" fill="none" stroke="#5dc5fb" stroke-width="3"/>`);
});
poly('M586 640L595 604L604 640Z', '#9db5b3');
poly('M876 660L885 620L894 660Z', '#9db5b3');

// fin, handle and head
const face = 'M1408 67L1470 125L1560 212L1630 262L1710 312Q1770 344 1850 358L2050 378';
poly('M1408 67H1445Q1452 68 1490 105L1560 180L1620 230L1680 273L1740 314Q1790 340 1850 352L2050 370L2062 366L2130 210L2120 400H1700L1408 300Z', '#205f90');
const head = 'L2130 212C2190 200 2240 206 2290 212C2340 205 2370 180 2500 178C2610 178 2700 230 2740 280C2790 340 2805 430 2802 520C2800 650 2760 780 2670 860C2610 900 2530 908 2470 906C2390 900 2330 870 2280 860C2210 864 2170 862 2115 855L2065 712Q2060 690 2045 688';
poly('M2000 374L2050 378Q2064 378 2070 366' + head + 'H2000Z', 'url(#skull)');
poly(face + 'H2075V690L1820 686L1408 662Z', '#3498dc');
add(`<path d="M2050 378Q2064 378 2070 366${head}L1820 686L1408 662" fill="none" stroke="#1f6496" stroke-width="3"/>`);
line(1409, 67, 1409, 555, '#287db7', 4);
add('<g fill="none" stroke-linecap="round">');
add('<path d="M1848 362H1830Q1800 368 1798 410V640Q1800 680 1820 684" stroke="#1c5580" stroke-width="3"/><path d="M1830 361L2050 378" stroke="#1c5580" stroke-width="4"/><path d="M1815 686H2045" stroke="#1c5580" stroke-width="4"/>');
add('<path d="M2630 215C2720 270 2770 370 2780 500C2782 620 2750 740 2680 820" stroke="url(#rim)" stroke-width="26" filter="url(#soft2)"/>');
add('<path d="M2738 285C2776 350 2792 430 2790 540" stroke="#6fd7ff" stroke-width="6" filter="url(#soft)"/>');
add('<path d="M2135 225L2080 370" stroke="#2878b2" stroke-width="14" filter="url(#soft)"/><path d="M2068 705L2122 842" stroke="#2878b2" stroke-width="14" filter="url(#soft)"/>');
add('<path d="M2290 225C2240 235 2150 270 2135 360C2125 440 2150 500 2210 500" stroke="#2a83c3" stroke-width="10" opacity=".55" filter="url(#soft)"/><path d="M2134 400C2135 450 2145 475 2162 490" stroke="#5abfff" stroke-width="6" filter="url(#soft)"/>');
add('<path d="M2126 690C2125 640 2140 595 2190 582" stroke="#58bdf9" stroke-width="6" filter="url(#soft)"/><path d="M2138 610C2150 590 2170 580 2200 590" stroke="#2a83c3" stroke-width="9" opacity=".7" filter="url(#soft)"/>');
add('<path d="M2290 290C2300 250 2320 238 2350 239H2440C2500 250 2490 400 2440 465C2400 510 2330 528 2240 525" stroke="#2c83c1" stroke-width="8" opacity=".5" filter="url(#soft)"/><path d="M2326 240H2430" stroke="#287ab5" stroke-width="2"/><path d="M2390 485Q2330 528 2250 526" stroke="#2a7dba" stroke-width="5" opacity=".8" filter="url(#soft)"/>');
add('<path d="M2320 560C2350 590 2420 610 2440 670C2470 740 2470 830 2440 850" stroke="#2c83c1" stroke-width="8" opacity=".4" filter="url(#soft)"/><path d="M2385 850H2330C2290 835 2280 810 2272 740" stroke="#2879b4" stroke-width="6" filter="url(#soft)"/><path d="M2340 575C2390 600 2420 625 2436 665" stroke="#47b0f7" stroke-width="7" filter="url(#soft)"/><path d="M2315 842L2395 850" stroke="#236fa5" stroke-width="2"/>');
add('<path d="M2118 862C2250 858 2330 900 2470 902C2590 906 2700 850 2760 720" stroke="#24689a" stroke-width="7" filter="url(#soft)"/></g>');
const eye = (d) => poly(d, '#379fe6', 'stroke="#184c74" stroke-width="3"');
add('<path d="M2276 275Q2300 400 2210 475" fill="none" stroke="#2778b2" stroke-width="18" opacity=".8" filter="url(#soft)"/><path d="M2210 612Q2275 700 2268 800" fill="none" stroke="#2778b2" stroke-width="16" opacity=".8" filter="url(#soft)"/>');
eye('M2284 265C2230 275 2185 315 2181 380C2177 430 2195 468 2206 467C2240 430 2290 380 2284 265Z');
eye('M2198 610C2170 630 2165 690 2175 730C2190 790 2240 805 2262 811C2268 740 2235 620 2198 610Z');
add('<path d="M2188 410Q2192 445 2203 455" stroke="#62c8ff" stroke-width="8" fill="none" filter="url(#soft)"/><path d="M2180 670Q2178 720 2200 760" stroke="#62c8ff" stroke-width="8" fill="none" filter="url(#soft)"/>');
poly('M2105 522Q2150 520 2205 538Q2160 552 2105 554Q2092 538 2105 522Z', '#3ba3ea', 'stroke="#1d5d8c" stroke-width="3"');
add('<path d="M2100 532V546" stroke="#7fdcff" stroke-width="6"/><path d="M2085 560Q2150 580 2220 545" fill="none" stroke="#2878b2" stroke-width="8" opacity=".7" filter="url(#soft)"/>');

document.getElementById('scene').innerHTML = out.join('');
})();
```
